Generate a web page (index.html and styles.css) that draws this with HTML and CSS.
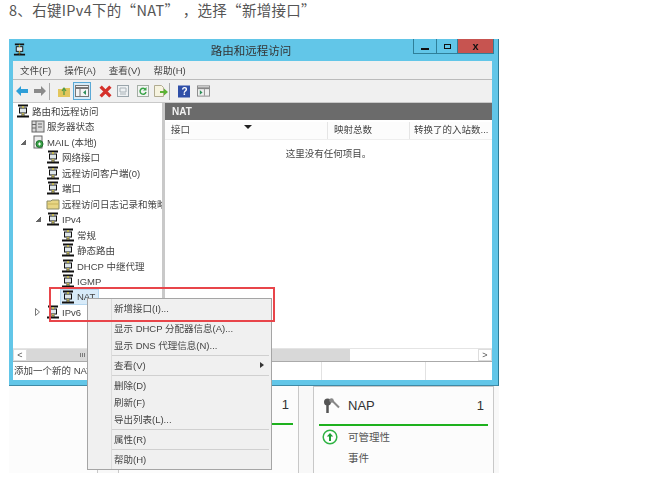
FILE: index.html
```html
<!DOCTYPE html>
<html lang="zh-CN">
<head>
    <meta charset="UTF-8">
    <meta name="viewport" content="width=device-width, initial-scale=1.0">
    <title>路由和远程访问</title>
    <link rel="stylesheet" href="styles.css">
</head>
<body>
    <svg class="defs" width="0" height="0">
        <symbol id="net" viewBox="0 0 14 14">
            <path d="M2 1.500h10M1 12.500h12" stroke="#111" stroke-width="1.800" fill="none"/>
            <rect x="3.500" y="4" width="7" height="5" fill="#dfe7ea" stroke="#111"/>
            <path d="M7 2v2M7 9v3" stroke="#d8c93a" stroke-width="1.400"/>
            <path d="M5 11h4" stroke="#333"/>
        </symbol>
    </svg>

    <p class="step">8、右键IPv4下的“NAT” ，选择“新增接口”</p>

    <div class="shot">
        <div class="window">
            <div class="titlebar">
                <svg class="title-icon"><use href="#net"/></svg>
                <span class="title-text">路由和远程访问</span>
                <div class="win-btns">
                    <div class="win-btn btn-min"><i></i></div>
                    <div class="win-btn btn-max"><i></i></div>
                    <div class="win-btn btn-close">x</div>
                </div>
            </div>

            <div class="client">
                <div class="menubar">
                    <span>文件(F)</span>
                    <span>操作(A)</span>
                    <span>查看(V)</span>
                    <span>帮助(H)</span>
                </div>

                <div class="toolbar">
                    <svg class="tool t-back" viewBox="0 0 12 12"><path d="M0 6l5-5v3h7v4H5v3z" fill="#2f9fd8"/></svg>
                    <svg class="tool t-fwd" viewBox="0 0 12 12"><path d="M12 6L7 1v3H0v4h7v3z" fill="#8a8a8a"/></svg>
                    <div class="tool-sep sep-a"></div>
                    <svg class="tool t-up" viewBox="0 0 12 12"><path d="M0 4h4l1-1h7v9H0z" fill="#e3c65c"/><path d="M6 10V4M4 6l2-3 2 3" stroke="#4f9a45" stroke-width="1.200" fill="none"/></svg>
                    <div class="tool-on">
                        <svg viewBox="0 0 14 12" width="14" height="12"><rect x=".5" y=".5" width="13" height="11" fill="#f4f4f4" stroke="#777"/><path d="M1 3h12" stroke="#777" stroke-width="2"/><path d="M5 4v7" stroke="#777"/><path d="M11 5L8 7.500l3 2.500z" fill="#2f8f5a"/></svg>
                    </div>
                    <svg class="tool t-del" viewBox="0 0 12 12"><path d="M1.500 1.500l9 9M10.500 1.500l-9 9" stroke="#d5302a" stroke-width="3"/></svg>
                    <svg class="tool t-prop" viewBox="0 0 12 12"><rect x=".5" y=".5" width="11" height="11" fill="#eef1f3" stroke="#9aa5ab"/><path d="M3 3h6v4H3zM3 9h6" stroke="#aab3b8" fill="none"/></svg>
                    <svg class="tool t-refresh" viewBox="0 0 12 12"><rect x=".5" y=".5" width="11" height="11" fill="#f2f4f2" stroke="#a5aea5"/><path d="M8.500 4.500A3 3 0 1 0 9 7" stroke="#3aa348" stroke-width="1.500" fill="none"/><path d="M9.500 2v3.500H6z" fill="#3aa348"/></svg>
                    <svg class="tool t-export" viewBox="0 0 14 12"><path d="M.5.500h7l2 2v9h-9z" fill="#f6f3df" stroke="#b0ab90"/><path d="M6 6h4V3.500L14 7l-4 3.500V8H6z" fill="#5cb335"/></svg>
                    <div class="tool-sep sep-b"></div>
                    <svg class="tool t-help" viewBox="0 0 12 12"><rect width="12" height="12" fill="#2f4fa8"/><text x="3.500" y="9.500" class="help-mark">?</text></svg>
                    <svg class="tool t-pane" viewBox="0 0 14 12"><rect x=".5" y=".5" width="13" height="11" fill="#f0f0f0" stroke="#888"/><path d="M1 3h12" stroke="#888" stroke-width="2"/><path d="M8 4v7" stroke="#888"/><path d="M3 5l3 2.500L3 10z" fill="#2f8f5a"/></svg>
                </div>

                <div class="panes">
                    <div class="tree">
                        <div class="row lv0"><svg class="ico"><use href="#net"/></svg>路由和远程访问</div>
                        <div class="row lv1">
                            <svg class="ico" viewBox="0 0 14 14"><rect x="1" y="2" width="12" height="11" fill="#d9d9d9" stroke="#666"/><path d="M5 2v11M1 5.500h4M1 9h4M7 5h4M7 8h4" stroke="#666"/></svg>服务器状态
                        </div>
                        <div class="row lv1"><span class="arrow open"></span>
                            <svg class="ico" viewBox="0 0 14 14"><rect x="3" y="1" width="8" height="12" fill="#eee" stroke="#666"/><circle cx="8.500" cy="9" r="3.500" fill="#3aa348" stroke="#1e6d2b"/><path d="M7 9h3M8.500 7.500v3" stroke="#fff"/></svg>MAIL (本地)
                        </div>
                        <div class="row lv2"><svg class="ico"><use href="#net"/></svg>网络接口</div>
                        <div class="row lv2"><svg class="ico"><use href="#net"/></svg>远程访问客户端(0)</div>
                        <div class="row lv2"><svg class="ico"><use href="#net"/></svg>端口</div>
                        <div class="row lv2">
                            <svg class="ico" viewBox="0 0 14 14"><path d="M1 4h4l1-1h7v9H1z" fill="#e8d684" stroke="#8a8a66"/><path d="M1 7h12" stroke="#c7b35a"/></svg>远程访问日志记录和策略
                        </div>
                        <div class="row lv2"><span class="arrow open"></span><svg class="ico"><use href="#net"/></svg>IPv4</div>
                        <div class="row lv3"><svg class="ico"><use href="#net"/></svg>常规</div>
                        <div class="row lv3"><svg class="ico"><use href="#net"/></svg>静态路由</div>
                        <div class="row lv3"><svg class="ico"><use href="#net"/></svg>DHCP 中继代理</div>
                        <div class="row lv3"><svg class="ico"><use href="#net"/></svg>IGMP</div>
                        <div class="row lv3"><span class="picked"><svg class="ico"><use href="#net"/></svg>NAT</span></div>
                        <div class="row lv2"><svg class="arrow closed" viewBox="0 0 5 8"><path d="M.5.500l4 3.500-4 3.500z" fill="#fff" stroke="#777"/></svg><svg class="ico"><use href="#net"/></svg>IPv6</div>
                    </div>

                    <div class="detail">
                        <div class="detail-head">NAT</div>
                        <div class="cols">
                            <div class="col col-a">接口<span class="sort"></span></div>
                            <div class="col col-b">映射总数</div>
                            <div class="col col-c">转换了的入站数...</div>
                        </div>
                        <div class="empty">这里没有任何项目。</div>
                    </div>
                </div>

                <div class="hscroll">
                    <div class="sb-btn">&lt;</div>
                    <div class="sb-thumb">ııı</div>
                    <div class="sb-track"></div>
                    <div class="sb-btn">&gt;</div>
                </div>

                <div class="status">
                    <div class="st-main">添加一个新的 NAT 接口</div>
                    <div class="st-cell"></div>
                    <div class="st-cell"></div>
                </div>
            </div>
        </div>

        <div class="cards">
            <div class="card card-stub"></div>
            <div class="card card-left">
                <div class="card-head"><span class="count">1</span></div>
            </div>
            <div class="card card-right">
                <div class="card-head">
                    <svg class="key" viewBox="0 0 17 16"><circle cx="4.500" cy="4" r="3.500" fill="#555"/><path d="M4.500 6v9" stroke="#555" stroke-width="2.500"/><path d="M8 1.500l8 8" stroke="#888" stroke-width="2"/><circle cx="8.500" cy="2.500" r="2.200" fill="#888"/></svg>
                    <span class="card-name">NAP</span>
                    <span class="count">1</span>
                </div>
                <div class="card-row">
                    <svg class="up" viewBox="0 0 16 16"><circle cx="8" cy="8" r="6.800" fill="#fff" stroke="#2fb344" stroke-width="1.500"/><path d="M8 12V6.500" stroke="#1c9c34" stroke-width="2"/><path d="M4.800 7.500L8 4l3.200 3.500z" fill="#1c9c34"/></svg>
                    可管理性
                </div>
                <div class="card-row plain">事件</div>
            </div>
        </div>

        <div class="red-box"></div>

        <div class="ctx">
            <div class="ctx-item">新增接口(I)...</div>
            <div class="ctx-item gap">显示 DHCP 分配器信息(A)...</div>
            <div class="ctx-item">显示 DNS 代理信息(N)...</div>
            <div class="ctx-sep"></div>
            <div class="ctx-item sub">查看(V)<span class="ctx-arrow"></span></div>
            <div class="ctx-sep"></div>
            <div class="ctx-item">删除(D)</div>
            <div class="ctx-item">刷新(F)</div>
            <div class="ctx-item">导出列表(L)...</div>
            <div class="ctx-sep"></div>
            <div class="ctx-item">属性(R)</div>
            <div class="ctx-sep"></div>
            <div class="ctx-item">帮助(H)</div>
        </div>
    </div>
</body>
</html>
```

FILE: styles.css
```css
body {
    margin: 0;
    background: #fff;
    font-family: "Liberation Sans", "Noto Sans CJK SC", sans-serif;
    color: #444;
    overflow: hidden;
}
.defs {
    position: absolute;
}
.step {
    margin: 0;
    padding: 0 0 0 9px;
    height: 39px;
    box-sizing: border-box;
    line-height: 19px;
    font-family: "Noto Sans CJK SC", sans-serif;
    font-size: 14.500px;
    letter-spacing: 0.300px;
    color: #555;
    white-space: nowrap;
}

.shot {
    position: relative;
    width: 490px;
    margin-left: 9px;
    font-size: 9.500px;
}

/* window */
.window {
    height: 347px;
    box-sizing: border-box;
    background: #62c6e8;
    border-right: 1px solid #2b7d99;
    border-bottom: 1px solid #3f8aa6;
    display: flex;
    flex-direction: column;
    filter: blur(0.3px);
}
.titlebar {
    height: 22px;
    flex: none;
    display: flex;
    position: relative;
    justify-content: center;
    align-items: center;
}
.title-icon {
    position: absolute;
    left: 4px;
    top: 4px;
    width: 13px;
    height: 13px;
}
.title-text {
    font-size: 11.500px;
    color: #333;
    margin-right: 5px;
}
.win-btns {
    position: absolute;
    right: 4px;
    top: 0;
    display: flex;
    height: 15px;
    border: 1px solid #2f7f99;
    border-top: 0;
    box-sizing: border-box;
}
.win-btn {
    width: 22px;
    display: flex;
    align-items: center;
    justify-content: center;
    border-right: 1px solid #2f7f99;
}
.btn-min i {
    width: 8px;
    height: 2px;
    background: #111;
    margin-top: 5px;
}
.btn-max {
    width: 20px;
}
.btn-max i {
    width: 5px;
    height: 3px;
    border: 1.500px solid #111;
}
.btn-close {
    width: 35px;
    border-right: 0;
    background: #c75450;
    color: #111;
    font-weight: bold;
    font-size: 11px;
    line-height: 12px;
}

.client {
    flex: 1;
    margin: 0 6px 5px 4px;
    background: #f0f0f0;
    display: flex;
    flex-direction: column;
    min-height: 0;
}
.menubar {
    height: 18px;
    flex: none;
    display: flex;
    align-items: center;
    padding-left: 7px;
    gap: 13px;
    color: #444;
    border-bottom: 1px solid #bbb;
}
.toolbar {
    height: 22px;
    flex: none;
    display: flex;
    align-items: center;
    padding-left: 3px;
}
.tool {
    width: 12px;
    height: 12px;
    flex: none;
}
.t-fwd { margin-left: 6px; }
.sep-a { margin-left: 3px; }
.t-up { margin-left: 8px; }
.tool-on {
    width: 16px;
    height: 16px;
    margin-left: 3px;
    border: 1px solid #5aa9d6;
    background: #d6ebf8;
    display: flex;
    align-items: center;
    justify-content: center;
}
.t-del { margin-left: 8px; width: 13px; height: 13px; }
.t-prop { margin-left: 5px; }
.t-refresh { margin-left: 8px; }
.t-export { margin-left: 5px; width: 14px; }
.sep-b { margin-left: 1px; }
.t-help { margin-left: 8px; height: 13px; }
.t-pane { margin-left: 7px; width: 13px; }
.help-mark {
    font-size: 10px;
    font-weight: bold;
    fill: #fff;
}
.tool-sep {
    width: 1px;
    height: 17px;
    background: #aaa;
}

/* panes */
.panes {
    flex: 1;
    min-height: 0;
    display: flex;
    gap: 3px;
    background: #c9c9c9;
    padding-top: 1px;
}
.tree {
    width: 149px;
    flex: none;
    background: #fff;
    overflow: hidden;
    color: #444;
}
.row {
    height: 15.500px;
    display: flex;
    align-items: center;
    white-space: nowrap;
}
.lv0 { padding-left: 3px; }
.lv1 { padding-left: 18px; }
.lv2 { padding-left: 33px; }
.lv3 { padding-left: 48px; }
.ico {
    width: 14px;
    height: 14px;
    flex: none;
    margin-right: 2px;
}
.arrow {
    flex: none;
    margin-left: -11px;
    margin-right: 5px;
}
.arrow.open {
    width: 6px;
    height: 6px;
    background: linear-gradient(135deg, transparent 50%, #666 50%);
}
.arrow.closed {
    width: 5px;
    height: 8px;
    margin-right: 6px;
}
.picked {
    display: flex;
    align-items: center;
    height: 16px;
    box-sizing: border-box;
    background: #d8ebf9;
    border: 1px solid #b5d7f0;
    padding-right: 3px;
    margin-left: -1px;
}

.detail {
    flex: 1;
    background: #fff;
    display: flex;
    flex-direction: column;
}
.detail-head {
    height: 17px;
    flex: none;
    background: #6b6b6b;
    color: #f2f2f2;
    font-weight: bold;
    font-size: 10px;
    line-height: 17px;
    padding-left: 7px;
}
.cols {
    height: 17px;
    flex: none;
    margin-top: 2px;
    display: flex;
    color: #444;
    line-height: 16px;
    border-bottom: 1px solid #eee;
    background: #fcfcfc;
}
.col {
    box-sizing: border-box;
    padding-left: 6px;
    border-right: 1px solid #e5e5e5;
    white-space: nowrap;
    position: relative;
}
.col-a { width: 163px; }
.col-b { width: 82px; }
.col-c { flex: 1; border-right: 0; padding-left: 4px; }
.sort {
    position: absolute;
    left: 79px;
    top: 3px;
    border-top: 4px solid #222;
    border-left: 4px solid transparent;
    border-right: 4px solid transparent;
}
.empty {
    text-align: center;
    margin-top: 6px;
    color: #444;
}

.hscroll {
    height: 14px;
    flex: none;
    display: flex;
    background: #fff;
    box-sizing: border-box;
    border-top: 1px solid #e4e4e4;
    border-bottom: 1px solid #aaa;
}
.sb-btn {
    width: 14px;
    text-align: center;
    line-height: 11px;
    font-size: 9px;
    color: #555;
    border: 1px solid #ddd;
    box-sizing: border-box;
    background: #fff;
}
.sb-thumb {
    width: 323px;
    background: #d8d8d8;
    text-align: center;
    line-height: 11px;
    font-size: 8px;
    color: #555;
    box-sizing: border-box;
    padding-right: 212px;
}
.sb-track {
    flex: 1;
}
.status {
    height: 18px;
    flex: none;
    display: flex;
    background: #fff;
    line-height: 18px;
    color: #444;
}
.st-main {
    width: 309px;
    padding-left: 1px;
    box-sizing: border-box;
    border-right: 1px solid #e2e2e2;
    white-space: nowrap;
}
.st-cell {
    width: 103px;
    border-right: 1px solid #e2e2e2;
}
.st-cell:last-child {
    flex: 1;
    border-right: 0;
}

/* cards under the window */
.cards {
    height: 87px;
    background: #f8f8f8;
    display: flex;
    color: #444;
}
.card {
    box-sizing: border-box;
    background: #fcfcfc;
    border: 1px solid #c8c8c8;
    border-top: 0;
    border-bottom: 0;
    flex: none;
}
.card-stub {
    width: 89px;
    border-left: 0;
}
.card-left {
    width: 181px;
    margin-left: 20px;
    padding: 0 5px;
}
.card-right {
    width: 181px;
    margin-left: 14px;
    padding: 0 5px;
    border-top: 1px solid #c8c8c8;
}
.card-head {
    height: 37px;
    display: flex;
    align-items: center;
    border-bottom: 2px solid #1eb11e;
    font-size: 13px;
    color: #333;
}
.card-left .card-head {
    justify-content: flex-end;
}
.key {
    width: 17px;
    height: 16px;
    margin-left: 4px;
}
.card-name {
    margin-left: 8px;
    flex: 1;
}
.count {
    margin-right: 4px;
}
.card-row {
    display: flex;
    align-items: center;
    font-size: 10.500px;
    height: 21px;
    color: #555;
}
.up {
    width: 16px;
    height: 16px;
    margin: 0 10px 0 3px;
}
.plain {
    padding-left: 29px;
}

/* overlays */
.red-box {
    position: absolute;
    left: 40px;
    top: 248px;
    width: 226px;
    height: 35px;
    box-sizing: border-box;
    border: 2px solid #e8454a;
    z-index: 2;
}
.ctx {
    position: absolute;
    left: 78px;
    top: 259px;
    width: 185px;
    height: 172px;
    box-sizing: border-box;
    padding-top: 1px;
    background: linear-gradient(90deg, #f0f0f0 23px, #dcdcdc 23px, #dcdcdc 24px, #f0f0f0 24px);
    border: 1px solid #a5a5a5;
    color: #444;
    z-index: 1;
    filter: blur(0.2px);
}
.ctx-item {
    height: 17px;
    line-height: 17px;
    padding-left: 26px;
    position: relative;
    white-space: nowrap;
}
.ctx-item.gap {
    margin-top: 3px;
}
.ctx-sep {
    height: 1px;
    margin: 1px 2px 1px 24px;
    background: #d0d0d0;
}
.ctx-arrow {
    position: absolute;
    right: 7px;
    top: 5px;
    border-left: 4px solid #333;
    border-top: 3px solid transparent;
    border-bottom: 3px solid transparent;
}
```
